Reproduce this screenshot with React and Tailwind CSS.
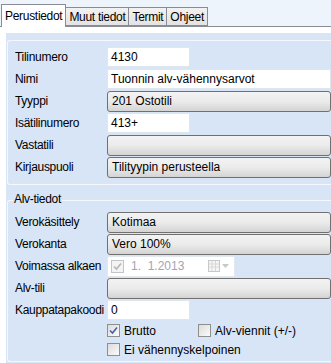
import React from 'react';

const Input = ({ value = '', className = '' }) => (
  <div className={`h-[20px] bg-white border border-[#dfe6ee] flex items-center px-[3px] ${className}`}>
    {value}
  </div>
);

const Combo = ({ value = '' }) => (
  <div className="h-[21px] flex-1 rounded-[3px] border border-[#707070] bg-gradient-to-b from-[#f3f3f3] via-[#ebebeb] to-[#d4d4d4] flex items-center px-[4px]">
    {value}
  </div>
);

const Row = ({ label, children }) => (
  <div className="flex items-center h-[22px]">
    <div className="w-[92px] shrink-0 tracking-[-0.3px]">{label}</div>
    <div className="flex-1 flex items-center">{children}</div>
  </div>
);

const Check = ({ checked, disabled }) => (
  <div
    className={`w-[13px] h-[13px] border flex items-center justify-center ${
      disabled ? 'border-[#c5c5c5] bg-[#f4f4f4]' : 'border-[#8f8f8f] bg-gradient-to-br from-[#dcdcdc] to-[#fbfbfb]'
    }`}
  >
    {checked && (
      <svg width="9" height="9" viewBox="0 0 9 9">
        <path
          d="M1 4.5 L3.5 7 L8 1.5"
          fill="none"
          stroke={disabled ? '#b5b5b5' : '#4a5fa8'}
          strokeWidth="1.6"
        />
      </svg>
    )}
  </div>
);

const Tab = ({ label, active }) =>
  active ? (
    <div className="h-[23px] px-[3px] tracking-[-0.3px] bg-white border border-b-0 border-[#898c95] flex items-center -mb-px relative z-10">
      {label}
    </div>
  ) : (
    <div className="h-[19px] px-[3px] tracking-[-0.3px] bg-gradient-to-b from-[#f2f2f2] to-[#e3e3e3] border border-[#898c95] -ml-px flex items-center">
      {label}
    </div>
  );

export default function App() {
  return (
    <div
      className="w-[331px] h-[363px] overflow-hidden bg-[#eef4fb] text-[12px] text-black leading-none"
      style={{ fontFamily: 'Tahoma, "Liberation Sans", Arial, sans-serif' }}
    >
      <div className="flex items-end h-[27px] pl-px border-b border-[#898c95]">
        <Tab label="Perustiedot" active />
        <Tab label="Muut tiedot" />
        <Tab label="Termit" />
        <Tab label="Ohjeet" />
      </div>
      <div className="bg-white pt-[6px] pl-[6px]">
        <div className="bg-[#d8e5f7] pt-[7px] pl-[1px] pb-[6px] h-[330px]">
          <div className="border border-r-0 border-[#f4f7fc] rounded-l-[3px] pl-[7px] pt-[5px] pb-[6px]">
            <Row label="Tilinumero">
              <Input value="4130" className="w-[83px]" />
            </Row>
            <Row label="Nimi">
              <Input value="Tuonnin alv-vähennysarvot" className="flex-1" />
            </Row>
            <Row label="Tyyppi">
              <Combo value="201 Ostotili" />
            </Row>
            <Row label="Isätilinumero">
              <Input value="413+" className="w-[83px]" />
            </Row>
            <Row label="Vastatili">
              <Combo />
            </Row>
            <Row label="Kirjauspuoli">
              <Combo value="Tilityypin perusteella" />
            </Row>
          </div>

          <div className="mt-[15px] border border-r-0 border-[#f4f7fc] rounded-l-[3px] pl-[7px] pt-[10px] pb-[5px] relative">
            <div className="absolute -top-[8px] left-[5px] px-[1px] tracking-[-0.3px] bg-[#d8e5f7]">Alv-tiedot</div>
            <Row label="Verokäsittely">
              <Combo value="Kotimaa" />
            </Row>
            <Row label="Verokanta">
              <Combo value="Vero 100%" />
            </Row>
            <Row label="Voimassa alkaen">
              <div className="w-[128px] h-[21px] bg-white border border-[#e2e8f0] flex items-center pl-[3px] text-[#a3a3b8]">
                <Check checked disabled />
                <span className="ml-[7px] flex-1">1.&nbsp; 1.2013</span>
                <svg width="22" height="12" viewBox="0 0 22 12" className="mr-[4px]">
                  <rect x="0.5" y="0.5" width="11" height="11" fill="#f5f5f5" stroke="#c8c8c8" />
                  <path d="M1 4h10M1 7h10M4 1v10M7.5 1v10" stroke="#d8d8d8" />
                  <path d="M14 4h7l-3.5 4z" fill="#c8c8c8" />
                </svg>
              </div>
            </Row>
            <Row label="Alv-tili">
              <Combo />
            </Row>
            <Row label="Kauppatapakoodi">
              <Input value="0" className="w-[83px]" />
            </Row>
            <div className="pl-[92px] pt-[3px] flex flex-col gap-[6px]">
              <div className="flex items-center">
                <Check checked />
                <span className="ml-[4px] w-[74px]">Brutto</span>
                <Check />
                <span className="ml-[4px]">Alv-viennit (+/-)</span>
              </div>
              <div className="flex items-center">
                <Check />
                <span className="ml-[4px]">Ei vähennyskelpoinen</span>
              </div>
            </div>
          </div>
        </div>
      </div>
    </div>
  );
}
